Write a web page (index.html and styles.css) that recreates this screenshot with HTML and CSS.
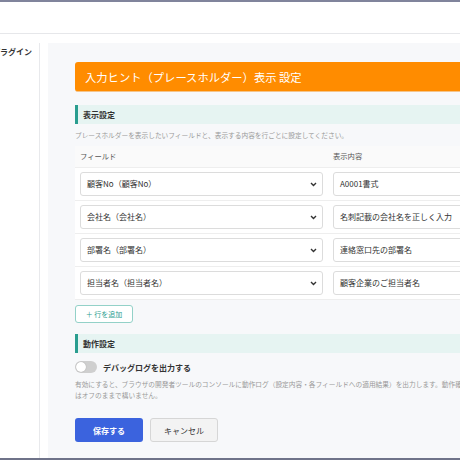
FILE: index.html
```html
<!DOCTYPE html>
<html lang="ja">
<head>
    <meta charset="UTF-8">
    <meta name="viewport" content="width=device-width, initial-scale=1.0">
    <title>入力ヒント設定</title>
    <link rel="stylesheet" href="styles.css">
</head>
<body>
<div class="app">
    <div class="topbar"></div>
    <div class="main">
        <div class="sidebar">
            <div class="side-item">プラグイン</div>
        </div>
        <div class="content">
            <div class="panel">
                <div class="title-bar">入力ヒント（プレースホルダー）表示 設定</div>

                <div class="section-title">表示設定</div>
                <p class="desc">プレースホルダーを表示したいフィールドと、表示する内容を行ごとに設定してください。</p>

                <div class="hint-table">
                    <div class="hint-head">
                        <div class="cell">フィールド</div>
                        <div class="cell">表示内容</div>
                    </div>
                    <div class="hint-row">
                        <div class="cell"><div class="select">顧客No（顧客No）<span class="chev"><svg width="7" height="5" viewBox="0 0 7 5"><path d="M1 1l2.5 2.5L6 1" fill="none" stroke="#333" stroke-width="1.4"/></svg></span></div></div>
                        <div class="cell"><div class="input">A0001書式</div></div>
                    </div>
                    <div class="hint-row">
                        <div class="cell"><div class="select">会社名（会社名）<span class="chev"><svg width="7" height="5" viewBox="0 0 7 5"><path d="M1 1l2.5 2.5L6 1" fill="none" stroke="#333" stroke-width="1.4"/></svg></span></div></div>
                        <div class="cell"><div class="input">名刺記載の会社名を正しく入力</div></div>
                    </div>
                    <div class="hint-row">
                        <div class="cell"><div class="select">部署名（部署名）<span class="chev"><svg width="7" height="5" viewBox="0 0 7 5"><path d="M1 1l2.5 2.5L6 1" fill="none" stroke="#333" stroke-width="1.4"/></svg></span></div></div>
                        <div class="cell"><div class="input">連絡窓口先の部署名</div></div>
                    </div>
                    <div class="hint-row">
                        <div class="cell"><div class="select">担当者名（担当者名）<span class="chev"><svg width="7" height="5" viewBox="0 0 7 5"><path d="M1 1l2.5 2.5L6 1" fill="none" stroke="#333" stroke-width="1.4"/></svg></span></div></div>
                        <div class="cell"><div class="input">顧客企業のご担当者名</div></div>
                    </div>
                </div>

                <button class="add-button">＋ 行を追加</button>

                <div class="section-title">動作設定</div>
                <div class="toggle-row">
                    <span class="toggle"><span class="knob"></span></span>
                    <span class="toggle-label">デバッグログを出力する</span>
                </div>
                <p class="help">有効にすると、ブラウザの開発者ツールのコンソールに動作ログ（設定内容・各フィールドへの適用結果）を出力します。動作確認が終わったらオフにしてください。通常<br>はオフのままで構いません。</p>

                <div class="actions">
                    <button class="save-button">保存する</button>
                    <button class="cancel-button">キャンセル</button>
                </div>
            </div>
        </div>
    </div>
</div>
</body>
</html>
```

FILE: styles.css
```css
body {
    margin: 0;
    font-family: "Noto Sans CJK JP", "Noto Sans", sans-serif;
    color: #333;
    background-color: #fff;
    overflow: hidden;
}
.app {
    width: 460px;
    height: 460px;
    box-sizing: border-box;
    border-top: 2px solid #80849c;
    border-bottom: 2px solid #6f7389;
    display: flex;
    flex-direction: column;
    overflow: hidden;
}
.topbar {
    height: 31px;
    flex-shrink: 0;
    border-bottom: 1px solid #e6e7ea;
}
.main {
    flex: 1;
    display: flex;
    min-height: 0;
}
.sidebar {
    width: 39px;
    flex-shrink: 0;
    margin-top: 9px;
    border-right: 1px solid #e8e9ec;
    overflow: hidden;
}
.side-item {
    margin-left: -8px;
    padding-top: 4px;
    font-size: 8px;
    font-weight: bold;
    white-space: nowrap;
    line-height: 10px;
}
.content {
    padding: 9px 0 0 8px;
    flex-shrink: 0;
}
.panel {
    width: 540px;
    height: 100%;
    box-sizing: border-box;
    background-color: #f7f8fa;
    padding: 19px 0 0 27px;
}
.title-bar {
    height: 30px;
    background-color: #ff8c00;
    color: #fff;
    font-size: 11.3px;
    line-height: 30px;
    padding-left: 10px;
    border-radius: 3px 0 0 3px;
    border-bottom: 1px solid #f5c48a;
    box-sizing: border-box;
    margin-bottom: 13px;
}
.section-title {
    height: 19px;
    line-height: 19px;
    background-color: #e6f4f2;
    border-left: 3px solid #2a9d8f;
    padding-left: 5px;
    font-size: 8px;
    font-weight: bold;
}
.desc {
    margin: 4px 0 0 0;
    font-size: 6.7px;
    line-height: 14px;
    color: #999;
}
.hint-table {
    margin-top: 4px;
    width: 510px;
}
.hint-head, .hint-row {
    display: grid;
    grid-template-columns: 253px 1fr;
}
.hint-head {
    height: 21px;
    line-height: 20px;
    font-size: 7.3px;
    color: #555;
    background-color: #fafafa;
    border-bottom: 1px solid #eee;
}
.hint-row {
    background-color: #fff;
    padding: 4px 0;
    border-bottom: 1px solid #eee;
}
.cell {
    padding-left: 5px;
}
.select, .input {
    height: 24px;
    box-sizing: border-box;
    border: 1px solid #dcdcdc;
    border-radius: 3px;
    background-color: #fff;
    font-size: 8px;
    line-height: 22px;
    padding-left: 6px;
    color: #333;
}
.select {
    width: 243px;
    display: flex;
    justify-content: space-between;
}
.chev {
    width: 7px;
    margin-right: 5px;
    display: flex;
    align-items: center;
}
.add-button {
    margin-top: 5px;
    width: 58px;
    height: 18px;
    padding: 0;
    border: 1px solid #93d1c8;
    border-radius: 3px;
    background-color: #fff;
    color: #2a9d8f;
    font-family: inherit;
    font-size: 7px;
    line-height: 16px;
    margin-bottom: 11px;
    display: block;
}
.toggle-row {
    display: flex;
    align-items: center;
    margin-top: 8px;
    height: 12px;
}
.toggle {
    width: 22px;
    height: 12px;
    border-radius: 6px;
    background-color: #cfcfcf;
    position: relative;
}
.knob {
    position: absolute;
    left: 1px;
    top: 1px;
    width: 10px;
    height: 10px;
    border-radius: 50%;
    background-color: #fff;
    box-shadow: 0 0 1px rgba(0, 0, 0, 0.3);
}
.toggle-label {
    margin-left: 6px;
    font-size: 8px;
    font-weight: bold;
}
.help {
    margin: 6px 0 0 0;
    font-size: 6.7px;
    line-height: 11px;
    color: #999;
    white-space: nowrap;
}
.actions {
    margin-top: 17px;
    display: flex;
    gap: 7px;
}
.save-button, .cancel-button {
    height: 24px;
    width: 68px;
    padding: 0;
    border-radius: 3px;
    font-family: inherit;
    font-size: 8px;
    cursor: pointer;
}
.save-button {
    background-color: #3b63de;
    border: none;
    color: #fff;
    font-weight: bold;
}
.cancel-button {
    background-color: #f3f3f3;
    border: 1px solid #d6d6d6;
    color: #333;
}
```
